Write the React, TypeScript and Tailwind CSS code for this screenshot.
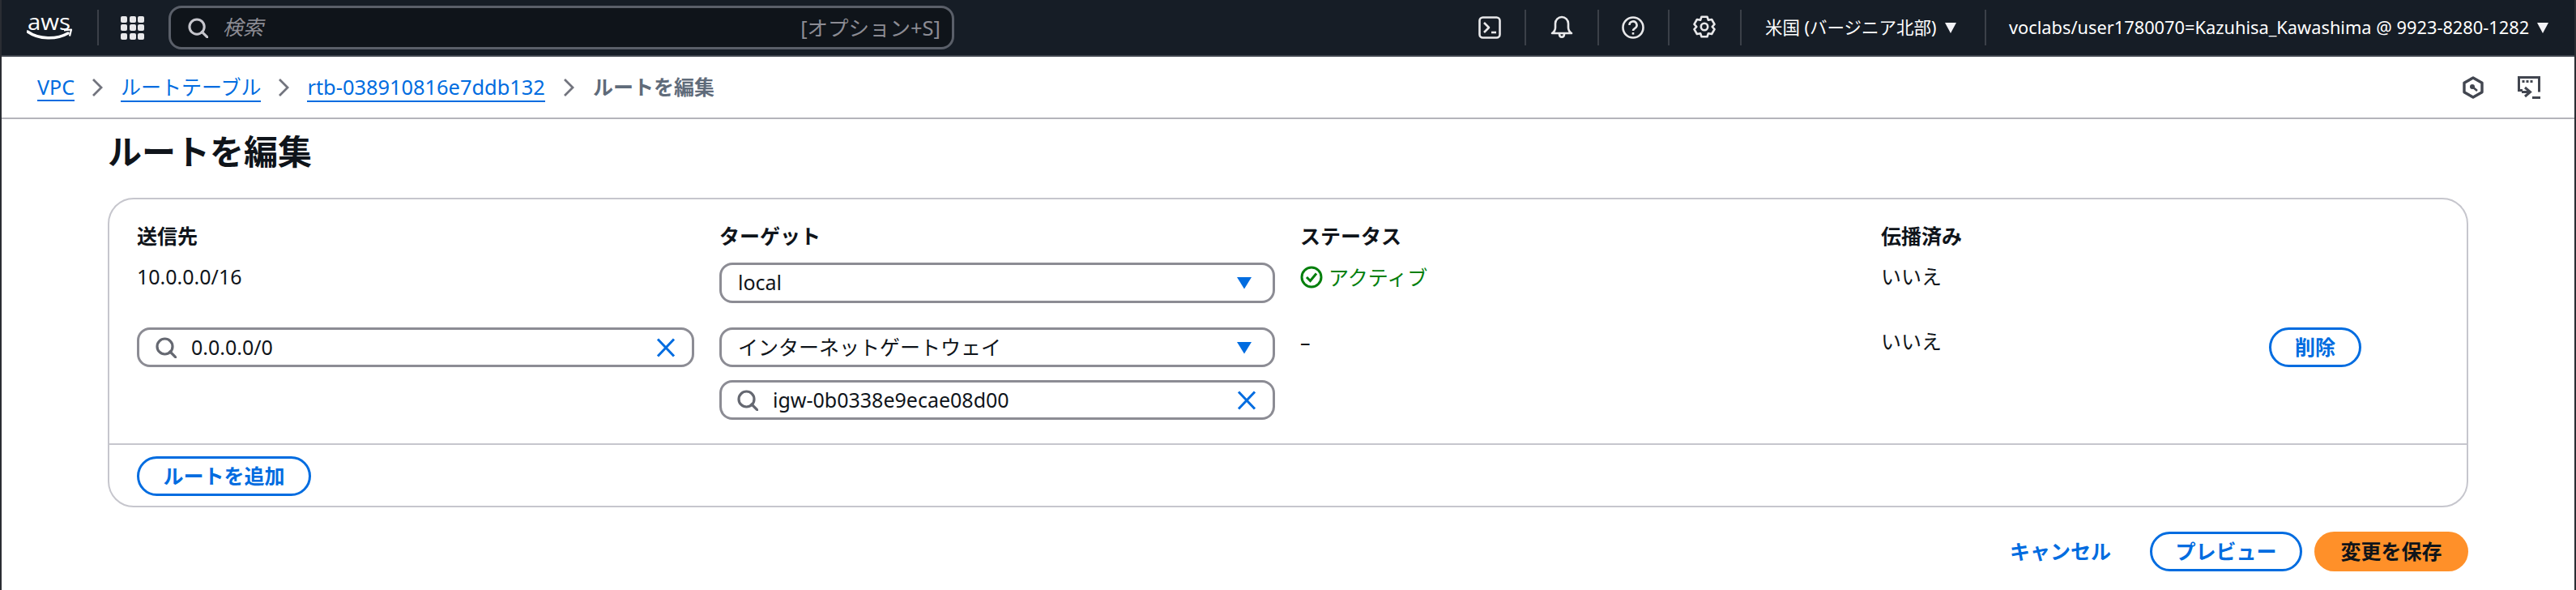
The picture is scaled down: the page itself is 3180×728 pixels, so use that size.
import React from "react";

const SearchIcon = ({ className = "" }: { className?: string }) => (
  <svg viewBox="0 0 26 26" className={className} fill="none" stroke="currentColor" strokeWidth="3.2">
    <circle cx="11.5" cy="11.5" r="9.5" />
    <path d="M18 18l7 7" strokeLinecap="round" />
  </svg>
);

const XIcon = () => (
  <svg viewBox="0 0 24 24" className="w-[24px] h-[24px] shrink-0 text-[#006ce0]" fill="none" stroke="currentColor" strokeWidth="3">
    <path d="M2 1.5l20 21M22 1.5l-20 21" />
  </svg>
);

const Caret = () => (
  <svg viewBox="0 0 18 16" className="w-[18px] h-[16px] shrink-0 text-[#006ce0]" fill="currentColor">
    <path d="M0 1h18L9 15.5z" />
  </svg>
);

const WhiteCaret = () => (
  <svg viewBox="0 0 14 14" className="w-[14px] h-[14px] shrink-0" fill="#f3f3f7">
    <path d="M0 1h14L7 14z" />
  </svg>
);

const Chevron = () => (
  <svg viewBox="0 0 14 24" className="w-[14px] h-[24px] shrink-0 text-[#72747e]" fill="none" stroke="currentColor" strokeWidth="2.8">
    <path d="M2 2l10 10L2 22" />
  </svg>
);

const Crumb = ({ children }: { children: React.ReactNode }) => (
  <span className="text-[#006ce0] border-b-[2px] border-[#006ce0] h-[35px] leading-[34px]">{children}</span>
);

const Sep = () => <div className="w-[2px] h-[44px] bg-[#3b4048] shrink-0" />;

const SearchField = ({ value, textOffset }: { value: string; textOffset: string }) => (
  <div className={`h-[49px] flex items-center border-[3px] border-[#8c8c94] rounded-[16px] bg-white pr-[20px] ${textOffset}`}>
    <SearchIcon className="w-[26px] h-[26px] text-[#656871] shrink-0" />
    <span className="ml-[18px] flex-1 text-[25px] text-[#0f141a]">{value}</span>
    <XIcon />
  </div>
);

const SelectField = ({ value, tall }: { value: string; tall?: boolean }) => (
  <div className={`${tall ? "h-[50px]" : "h-[49px]"} flex items-center justify-between border-[3px] border-[#8c8c94] rounded-[16px] bg-white pl-[20px] pr-[26px]`}>
    <span className="text-[25px] text-[#0f141a]">{value}</span>
    <Caret />
  </div>
);

const PillButton = ({ children, className = "" }: { children: React.ReactNode; className?: string }) => (
  <div className={`h-[49px] flex items-center justify-center rounded-full border-[3px] border-[#006ce0] text-[#006ce0] text-[25px] font-bold bg-white ${className}`}>
    {children}
  </div>
);

export default function App() {
  return (
    <div className="w-[3180px] h-[728px] bg-white overflow-hidden border-x-[2px] border-[#2a2d33] font-['Noto_Sans','Noto_Sans_CJK_JP',sans-serif] text-[#0f141a] flex flex-col">
      <header className="h-[70px] shrink-0 bg-[#161d26] border-b-[2px] border-[#3f444d] flex items-center text-white">
        <svg viewBox="0 -10 58 56" className="ml-[31px] w-[58px] h-[56px] shrink-0" fill="none">
          <text x="1" y="21" fontFamily="'Open Sans',sans-serif" fontSize="27" fill="#fff" textLength="53" lengthAdjust="spacingAndGlyphs">aws</text>
          <path d="M1 23c14 10 36 10 50 2" stroke="#fff" strokeWidth="3.4" strokeLinecap="round" />
          <path d="M46 21.5l9-1-2 8" stroke="#fff" strokeWidth="2.2" strokeLinejoin="round" />
        </svg>
        <div className="ml-[29px] w-[2px] h-[44px] bg-[#3b4048] shrink-0" />
        <div className="ml-[27px] grid grid-cols-3 gap-[2.5px] shrink-0">
          {Array.from({ length: 9 }).map((_, i) => (
            <div key={i} className="w-[8px] h-[8px] rounded-[2px] bg-[#e8e8ea]" />
          ))}
        </div>
        <div className="ml-[30px] w-[970px] h-[54px] rounded-[16px] border-[3px] border-[#5a5f69] bg-[#0f141a] flex items-center pl-[21px] pr-[14px] shrink-0">
          <SearchIcon className="w-[25px] h-[25px] text-[#c6c6cd] shrink-0" />
          <span className="ml-[18px] flex-1 text-[25px] italic text-[#8c8c94]">検索</span>
          <span className="text-[25.5px] text-[#8c8c94]">[オプション+S]</span>
        </div>
        <div className="ml-[647px] w-[28px] shrink-0">
          <svg viewBox="0 0 28 28" className="w-[28px] h-[28px]" fill="none" stroke="#e8e8ea" strokeWidth="2.6">
            <rect x="1.5" y="1.5" width="25" height="25" rx="4" />
            <path d="M7 8l6 6-6 6" strokeLinejoin="round" />
            <path d="M16 20h6" />
          </svg>
        </div>
        <div className="ml-[29px]"><Sep /></div>
        <div className="ml-[30px] shrink-0">
          <svg viewBox="0 0 28 30" className="w-[28px] h-[30px]" fill="none" stroke="#e8e8ea" strokeWidth="2.6">
            <path d="M2 22c3-2 4-4 4-7V10a8 8 0 0 1 16 0v5c0 3 1 5 4 7z" strokeLinejoin="round" />
            <path d="M11 23c0 5 6 5 6 0" />
          </svg>
        </div>
        <div className="ml-[30px]"><Sep /></div>
        <div className="ml-[28px] shrink-0">
          <svg viewBox="0 0 28 28" className="w-[28px] h-[28px]" fill="none" stroke="#e8e8ea" strokeWidth="2.6">
            <circle cx="14" cy="14" r="12.5" />
            <path d="M9.5 11a4.5 4.5 0 1 1 6.8 3.8c-1.5 1-2.3 1.8-2.3 3.2" />
            <path d="M14 20v2.6" />
          </svg>
        </div>
        <div className="ml-[29px]"><Sep /></div>
        <div className="ml-[29px] shrink-0">
          <svg viewBox="0 0 28 30" className="w-[28px] h-[30px]" fill="none" stroke="#e8e8ea" strokeWidth="2.6" strokeLinejoin="round">
            <path d="M10.5 1.8h7l1.4 4 4.2-.8 3.4 5.8-2.8 3.2 2.8 3.2-3.4 5.8-4.2-.8-1.4 4h-7l-1.4-4-4.2.8L1.5 17.2l2.8-3.2-2.8-3.2L4.900 5l4.200.800z" />
            <circle cx="14" cy="14" r="4.200" />
          </svg>
        </div>
        <div className="ml-[30px]"><Sep /></div>
        <span className="ml-[29px] text-[21.5px] whitespace-nowrap w-[212px] shrink-0">米国 (バージニア北部)</span>
        <div className="ml-[10px]"><WhiteCaret /></div>
        <div className="ml-[35px]"><Sep /></div>
        <span className="ml-[28px] text-[21.8px] whitespace-nowrap w-[642px] shrink-0">voclabs/user1780070=Kazuhisa_Kawashima @ 9923-8280-1282</span>
        <div className="ml-[10px]"><WhiteCaret /></div>
      </header>

      <nav className="h-[77px] shrink-0 border-b-[2px] border-[#b4b4bb] flex items-center pl-[44px] pr-[42px] text-[25px]">
        <Crumb>VPC</Crumb>
        <div className="ml-[21px]"><Chevron /></div>
        <div className="ml-[22px]"><Crumb>ルートテーブル</Crumb></div>
        <div className="ml-[21px]"><Chevron /></div>
        <div className="ml-[22px] text-[25.4px]"><Crumb>rtb-038910816e7ddb132</Crumb></div>
        <div className="ml-[22px]"><Chevron /></div>
        <span className="ml-[23px] font-bold text-[#5f6b7a]">ルートを編集</span>
        <div className="ml-auto flex items-center gap-[42px]">
          <svg viewBox="0 0 26 28" className="w-[26px] h-[28px]" fill="none" stroke="#424650" strokeWidth="3.4">
            <path d="M13 2l11 6.200v11.600L13 26 2 19.800V8.200z" strokeLinejoin="round" />
            <circle cx="12" cy="13" r="3" fill="#424650" stroke="none" />
            <path d="M12 13l6 5" strokeWidth="2.600" />
          </svg>
          <svg viewBox="0 0 28 28" className="w-[28px] h-[28px]" fill="none" stroke="#424650" strokeWidth="3">
            <path d="M6 17.500H1.500V1.500h25v18" />
            <path d="M5.500 6.500h3M10.500 6.500h3M15.500 6.500h3" strokeWidth="3" />
            <path d="M9 14l6.500 5.500L9 25M5 19.500h10" />
            <path d="M18 26.500h10" />
          </svg>
        </div>
      </nav>

      <main className="flex-1 px-[131px]">
        <h1 className="h-[80px] flex items-center text-[42px] font-bold leading-none">ルートを編集</h1>
        <section className="mt-[17px] w-[2914px] border-[2px] border-[#c6c6cd] rounded-[32px]">
          <div className="pl-[34px] pt-[28px] pb-[29px] text-[25px] flex">
            <div className="grid grid-cols-[688px_686px_686px_448px] gap-x-[31px]">
              <div className="h-[36px] leading-[34px] font-bold mb-[14px]">送信先</div>
              <div className="h-[36px] leading-[34px] font-bold">ターゲット</div>
              <div className="h-[36px] leading-[34px] font-bold">ステータス</div>
              <div className="h-[36px] leading-[34px] font-bold">伝播済み</div>

              <div className="h-[36px] leading-[34px] mb-[44px]">10.0.0.0/16</div>
              <SelectField value="local" tall />
              <div className="h-[36px] flex items-center text-[#037f0c]">
                <svg viewBox="0 0 28 28" className="w-[28px] h-[28px] shrink-0" fill="none" stroke="#037f0c" strokeWidth="3">
                  <circle cx="14" cy="14" r="12" />
                  <path d="M8 14l4.500 4.500L20 9.500" />
                </svg>
                <span className="ml-[7px] leading-[34px]">アクティブ</span>
              </div>
              <div className="h-[36px] leading-[34px]">いいえ</div>

              <SearchField value="0.0.0.0/0" textOffset="pl-[20px]" />
              <div className="flex flex-col gap-[16px]">
                <SelectField value="インターネットゲートウェイ" />
                <SearchField value="igw-0b0338e9ecae08d00" textOffset="pl-[19px]" />
              </div>
              <div className="h-[36px] leading-[36px]">–</div>
              <div className="h-[36px] leading-[34px]">いいえ</div>
            </div>
            <div className="ml-[31px] pt-[130px]">
              <PillButton className="w-[114px]">削除</PillButton>
            </div>
          </div>
          <div className="border-t-[2px] border-[#c6c6cd] pl-[34px] pt-[14px] pb-[12px]">
            <PillButton className="w-[215px]">ルートを追加</PillButton>
          </div>
        </section>
        <div className="mt-[30px] flex items-center justify-end">
          <span className="text-[25px] font-bold text-[#006ce0]">キャンセル</span>
          <PillButton className="ml-[48px] w-[188px]">プレビュー</PillButton>
          <div className="ml-[15px] w-[190px] h-[49px] rounded-full bg-[#ff9029] flex items-center justify-center text-[25px] font-bold text-[#0f141a]">変更を保存</div>
        </div>
      </main>
    </div>
  );
}
